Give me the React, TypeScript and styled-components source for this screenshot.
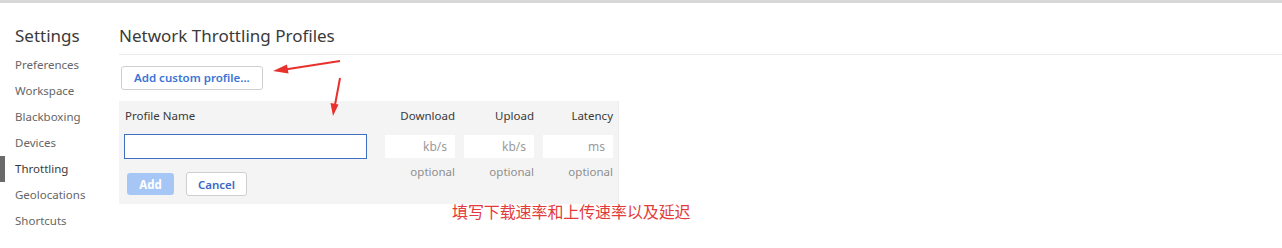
import React from "react";
import styled, { createGlobalStyle } from "styled-components";

const Global = createGlobalStyle`
  html, body { margin: 0; padding: 0; background: #fff; }
  body { font-family: "Noto Sans", "Noto Sans CJK SC", sans-serif; color: #333; }
  * { box-sizing: border-box; }
`;

const Page = styled.div`
  position: relative;
  width: 1282px;
  height: 248px;
  overflow: hidden;
  border-top: 3px solid #d8d8d8;
`;

const Main = styled.div`
  display: flex;
`;

const Sidebar = styled.nav`
  width: 119px;
  flex: none;
  display: flex;
  flex-direction: column;
`;

const SideTitle = styled.div`
  height: 49px;
  padding: 22px 0 0 15px;
  font-size: 17px;
  line-height: 22px;
  color: #3a3a3a;
`;

const SideItem = styled.div<{ $active?: boolean }>`
  position: relative;
  height: 26px;
  line-height: 26px;
  padding-left: 15px;
  font-size: 11.5px;
  color: ${(p) => (p.$active ? "#3a3a3a" : "#666")};
  &::before {
    content: "";
    display: ${(p) => (p.$active ? "block" : "none")};
    position: absolute;
    left: 0;
    top: 0;
    width: 5px;
    height: 26px;
    background: #6a6a6a;
  }
`;

const Content = styled.div`
  flex: 1;
  display: flex;
  flex-direction: column;
`;

const Header = styled.div`
  height: 52px;
  padding: 22px 0 0 0;
  font-size: 17px;
  line-height: 22px;
  color: #3a3a3a;
  border-bottom: 1px solid #ebebeb;
`;

const Body = styled.div`
  display: flex;
  flex-direction: column;
  align-items: flex-start;
  padding-top: 11px;
`;

const OutlineButton = styled.button`
  height: 24px;
  padding: 0 12px;
  margin-left: 2px;
  background: #fff;
  border: 1px solid #cfcfcf;
  border-radius: 3px;
  color: #3a74d6;
  font-family: inherit;
  font-weight: 600;
  font-size: 11.5px;
  line-height: 22px;
`;

const Table = styled.div`
  margin-top: 11px;
  width: 500px;
  background: #f4f4f4;
  border-right: 1px solid #ececec;
  padding: 8px 6px 8px 5px;
  display: grid;
  grid-template-columns: 252px 70px 70px 70px;
  column-gap: 9px;
  align-items: center;
`;

const HeadCell = styled.div<{ $right?: boolean }>`
  font-size: 11.5px;
  line-height: 14px;
  color: #3a3a3a;
  text-align: ${(p) => (p.$right ? "right" : "left")};
  padding-left: ${(p) => (p.$right ? "0" : "1px")};
`;

const NameInput = styled.input`
  margin-top: 11px;
  width: 243px;
  height: 25px;
  border: 1px solid #3d6fc4;
  background: #fff;
  outline: none;
  font-family: inherit;
`;

const ValueInput = styled.input`
  margin-top: 11px;
  width: 70px;
  height: 23px;
  border: none;
  background: #fff;
  text-align: right;
  padding-right: 8px;
  font-family: inherit;
  font-size: 12px;
  outline: none;
  &::placeholder { color: #9a9a9a; }
`;

const Optional = styled.div`
  align-self: start;
  margin-top: 6px;
  text-align: right;
  font-size: 11.5px;
  line-height: 14px;
  color: #8e8e8e;
`;

const ButtonRow = styled.div`
  display: flex;
  gap: 12px;
  margin-top: 14px;
  padding-left: 3px;
`;

const PrimaryButton = styled.button`
  width: 47px;
  height: 22px;
  border: none;
  border-radius: 3px;
  background: #a6c7f5;
  color: #fff;
  font-family: inherit;
  font-weight: 700;
  font-size: 11.5px;
  padding: 0;
`;

const SecondaryButton = styled.button`
  width: 61px;
  height: 24px;
  margin-top: -1px;
  border: 1px solid #cfcfcf;
  border-radius: 3px;
  background: #fff;
  color: #3a68c4;
  font-family: inherit;
  font-weight: 600;
  font-size: 11.5px;
  padding: 0;
`;

const Note = styled.div`
  position: absolute;
  left: 452px;
  top: 197px;
  font-family: "Noto Sans CJK SC", sans-serif;
  font-size: 16px;
  line-height: 22px;
  color: #e33b3b;
  letter-spacing: -0.1px;
`;

const Arrows = styled.svg`
  position: absolute;
  left: 0;
  top: 0;
  pointer-events: none;
`;

const items = [
  "Preferences",
  "Workspace",
  "Blackboxing",
  "Devices",
  "Throttling",
  "Geolocations",
  "Shortcuts",
];

export default function App() {
  return (
    <>
      <Global />
      <Page>
        <Main>
          <Sidebar>
            <SideTitle>Settings</SideTitle>
            {items.map((it) => (
              <SideItem key={it} $active={it === "Throttling"}>
                {it}
              </SideItem>
            ))}
          </Sidebar>
          <Content>
            <Header>Network Throttling Profiles</Header>
            <Body>
              <OutlineButton>Add custom profile...</OutlineButton>
              <Table>
                <HeadCell>Profile Name</HeadCell>
                <HeadCell $right>Download</HeadCell>
                <HeadCell $right>Upload</HeadCell>
                <HeadCell $right>Latency</HeadCell>
                <NameInput />
                <ValueInput placeholder="kb/s" />
                <ValueInput placeholder="kb/s" />
                <ValueInput placeholder="ms" />
                <ButtonRow>
                  <PrimaryButton>Add</PrimaryButton>
                  <SecondaryButton>Cancel</SecondaryButton>
                </ButtonRow>
                <Optional>optional</Optional>
                <Optional>optional</Optional>
                <Optional>optional</Optional>
              </Table>
            </Body>
          </Content>
        </Main>
        <Note>填写下载速率和上传速率以及延迟</Note>
        <Arrows width="1282" height="248" viewBox="0 0 1282 248">
          <g fill="#e8302c" stroke="#e8302c">
            <line x1="340" y1="58" x2="285" y2="66.5" strokeWidth="2" />
            <polygon points="273,68 287,61.5 288.5,70.5" stroke="none" />
            <line x1="340" y1="75" x2="335" y2="102" strokeWidth="2" />
            <polygon points="333,113 330.5,100 338.5,101.5" stroke="none" />
          </g>
        </Arrows>
      </Page>
    </>
  );
}
